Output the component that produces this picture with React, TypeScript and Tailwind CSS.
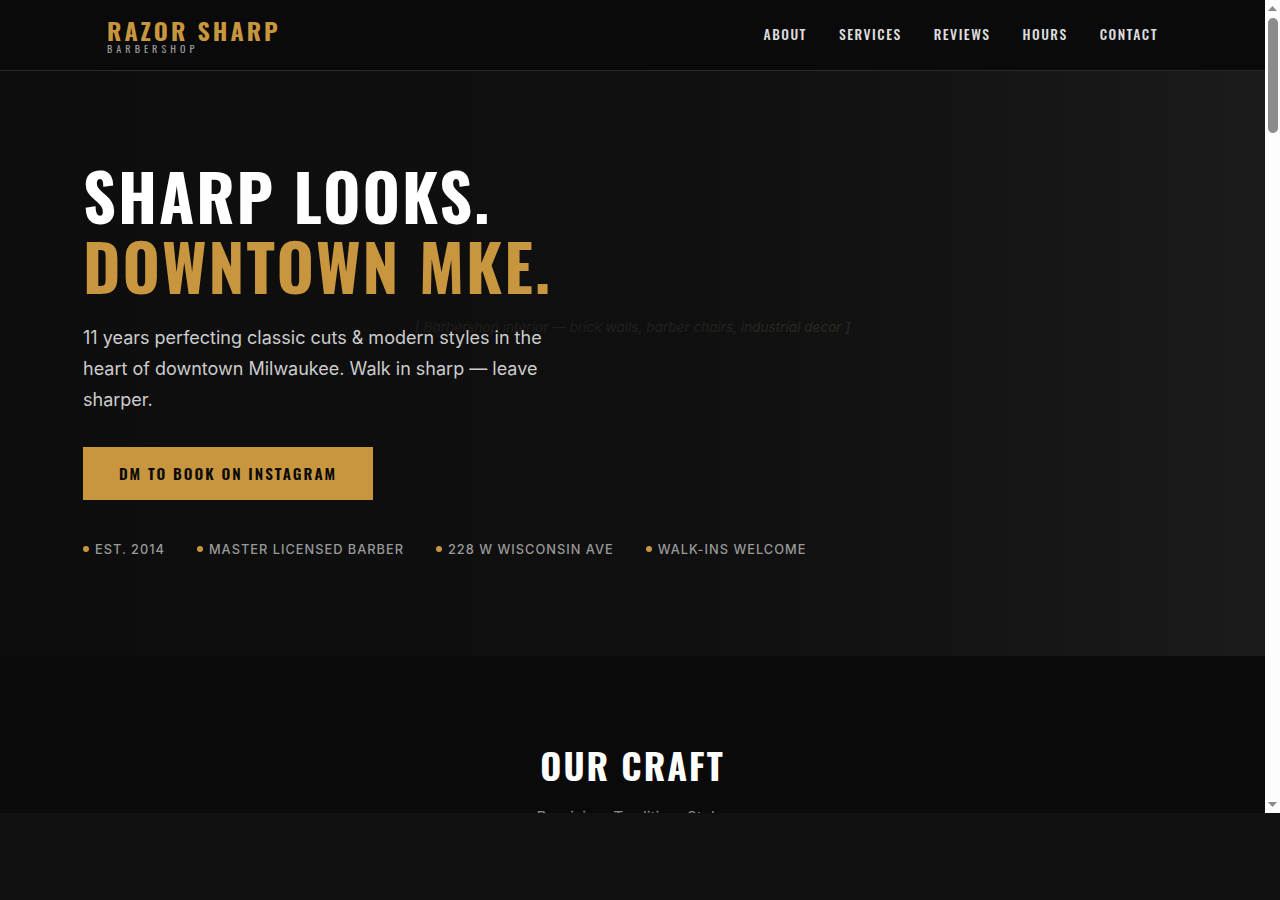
const display = "font-['Oswald',sans-serif]"

const navLinks = ['About', 'Services', 'Reviews', 'Hours', 'Contact']
const facts = ['Est. 2014', 'Master Licensed Barber', '228 W Wisconsin Ave', 'Walk-ins Welcome']

export default function App() {
  return (
    <div className="h-[900px] bg-[#111111] font-['Inter',sans-serif]">
      <div className="h-[813px] flex">
        <main className="flex-1 min-w-0 overflow-hidden bg-[#0a0a0a]">
          {/* Nav */}
          <header className="h-[71px] border-b border-[#2a2a2a] bg-[#0a0a0a] px-[107px] flex items-center justify-between">
            <div className="flex flex-col">
              <span className={`${display} text-2xl leading-[26px] font-bold tracking-[3px] text-[#c8963e] uppercase`}>Razor Sharp</span>
              <span className={`${display} text-[10.2px] leading-[11px] tracking-[4px] text-[#999999] uppercase`}>Barbershop</span>
            </div>
            <nav className="flex gap-8 pb-[2px]">
              {navLinks.map((l) => (
                <a key={l} className={`${display} text-[13.6px] font-medium tracking-[1.5px] text-[#dddddd] uppercase`}>{l}</a>
              ))}
            </nav>
          </header>

          {/* Hero */}
          <section className="relative h-[585px] bg-[#1c1c1c] overflow-hidden">
            <div className="absolute inset-x-0 top-[243px] text-center">
              <span className="italic text-[13.6px] text-[#5a5041]">[ Barbershop interior — brick walls, barber chairs, industrial decor ]</span>
            </div>
            <div className="absolute inset-0 bg-[linear-gradient(90deg,rgba(10,10,10,0.82)_0%,rgba(10,10,10,0.68)_55%,rgba(10,10,10,0.45)_75%,rgba(10,10,10,0.05)_100%)]" />
            <div className="relative pl-[83px] pt-[89px]">
              <h1 className={`${display} text-[64px] leading-[70.4px] font-bold tracking-[2px] text-white uppercase`}>
                Sharp Looks.
                <br />
                <span className="text-[#c8963e]">Downtown MKE.</span>
              </h1>
              <p className="mt-[21px] w-[480px] text-lg leading-[31px] text-[#cccccc]">
                11 years perfecting classic cuts &amp; modern styles in the heart of downtown Milwaukee. Walk in sharp — leave sharper.
              </p>
              <a className={`${display} mt-8 flex items-center justify-center w-[290px] h-[53px] bg-[#c8963e] text-[15.2px] font-semibold tracking-[2px] text-[#0a0a0a] uppercase`}>
                DM to Book on Instagram
              </a>
              <ul className="mt-10 flex gap-8">
                {facts.map((f) => (
                  <li key={f} className="flex items-center gap-1.5 text-[12.8px] font-medium tracking-[1px] text-[#999999] uppercase">
                    <span className="w-1.5 h-1.5 rounded-full bg-[#c8963e]" />
                    {f}
                  </li>
                ))}
              </ul>
            </div>
          </section>

          {/* Craft */}
          <section className="bg-[#0a0a0a] pt-[87px] text-center">
            <h2 className={`${display} text-[36px] leading-[44px] font-bold tracking-[2px] text-white uppercase`}>Our Craft</h2>
            <p className="mt-[19px] text-[15.6px] text-[#888888]">Precision. Tradition. Style.</p>
          </section>
        </main>

        {/* Scrollbar */}
        <aside className="w-[15px] shrink-0 bg-[#fdfdfd] flex flex-col items-center">
          <svg width="9" height="5" viewBox="0 0 9 5" className="mt-[6px] mb-[7px] fill-[#8a8a8a]"><path d="M4.5 0 9 5H0z" /></svg>
          <div className="w-[10px] h-[115px] rounded-[5px] bg-[#8c8c8c]" />
          <svg width="9" height="5" viewBox="0 0 9 5" className="mt-auto mb-[6px] fill-[#8a8a8a]"><path d="M0 0h9L4.5 5z" /></svg>
        </aside>
      </div>
    </div>
  )
}
